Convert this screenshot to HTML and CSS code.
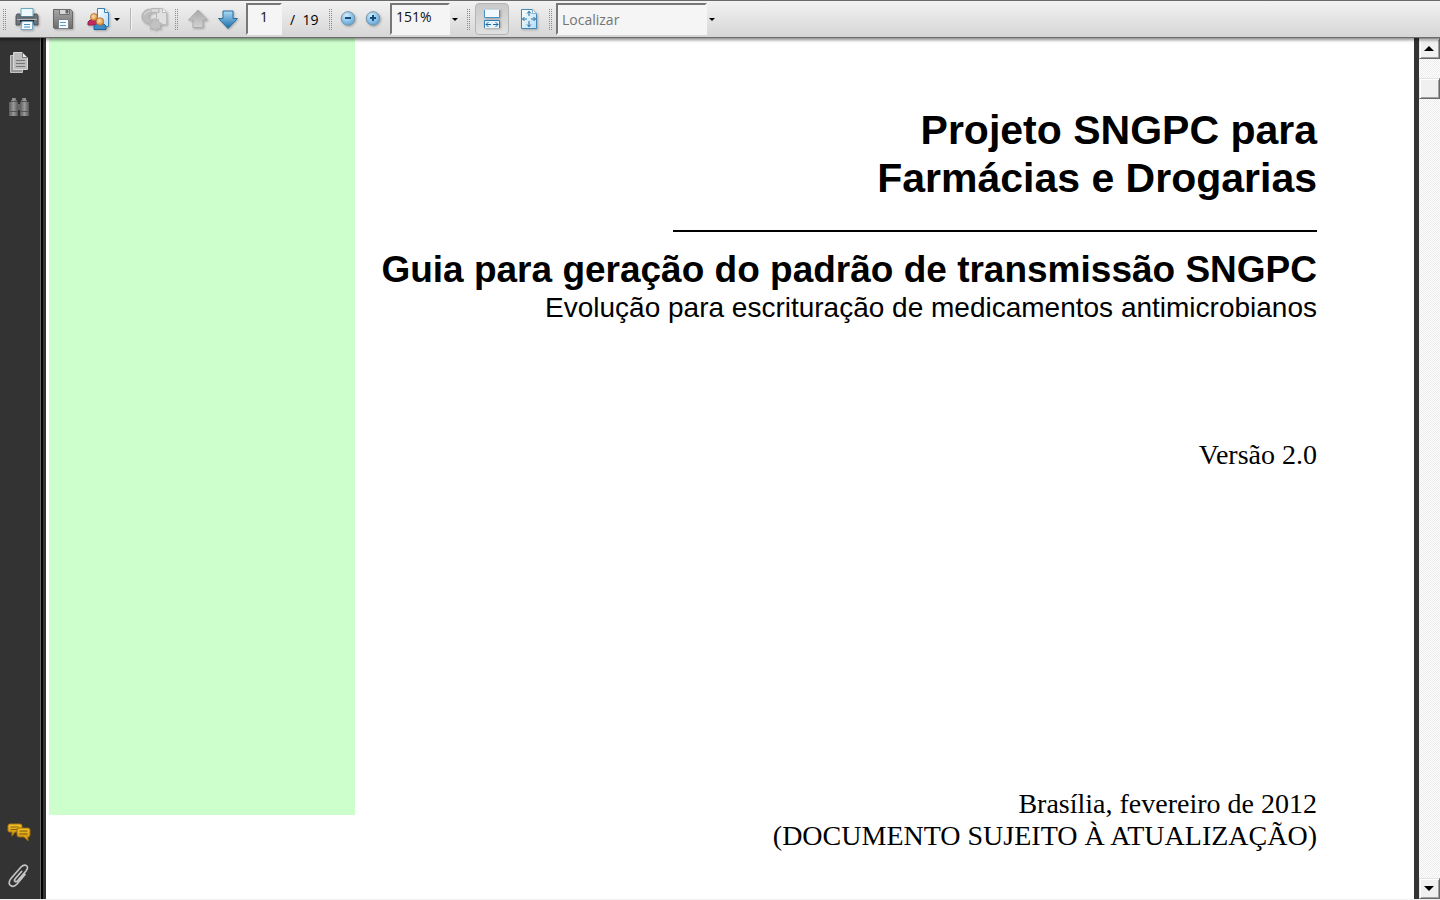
FILE: index.html
```html
<!DOCTYPE html>
<html lang="pt-BR">
<head>
<meta charset="utf-8">
<title>Guia para geração do padrão de transmissão SNGPC</title>
<link rel="stylesheet" href="styles.css">
</head>
<body>
<svg class="defs" width="0" height="0" aria-hidden="true">
  <defs>
    <linearGradient id="blue" x1="0" y1="0" x2="0" y2="1"><stop offset="0" stop-color="#a9dcf5"/><stop offset="1" stop-color="#1769ac"/></linearGradient>
    <linearGradient id="gray" x1="0" y1="0" x2="0" y2="1"><stop offset="0" stop-color="#a8a8a8"/><stop offset="1" stop-color="#d2d2d2"/></linearGradient>
    <linearGradient id="paper" x1="0" y1="0" x2="1" y2="1"><stop offset="0" stop-color="#ffffff"/><stop offset="1" stop-color="#b5dcf5"/></linearGradient>
    <linearGradient id="metal" x1="0" y1="0" x2="0" y2="1"><stop offset="0" stop-color="#a8a8a8"/><stop offset="1" stop-color="#6c6c6c"/></linearGradient>
    <linearGradient id="barrel" x1="0" y1="0" x2="1" y2="0"><stop offset="0" stop-color="#5b5b5b"/><stop offset=".5" stop-color="#989898"/><stop offset="1" stop-color="#575757"/></linearGradient>
    <radialGradient id="ball" cx=".4" cy=".3" r=".7"><stop offset="0" stop-color="#d3ecfb"/><stop offset="1" stop-color="#5fa5d8"/></radialGradient>
    <radialGradient id="skin" cx=".4" cy=".4" r=".6"><stop offset="0" stop-color="#ffe2ac"/><stop offset="1" stop-color="#e08a35"/></radialGradient>
    <linearGradient id="gold" x1="0" y1="0" x2="0" y2="1"><stop offset="0" stop-color="#f5c42b"/><stop offset="1" stop-color="#c98b0c"/></linearGradient>
  </defs>
</svg>
<header class="toolbar">
  <span class="grip"></span>
  <button class="tool" aria-label="Imprimir">
    <svg width="24" height="24" viewBox="0 0 24 24"><path d="M6 1.500h12v8H6z" fill="#edf9fc" stroke="#6aa9bd"/><path d="M2 7h3v3h14V7h3l1 2v9h-4v-2H5v2H1V9z" fill="#6c737a" stroke="#53595e"/><path d="M2 12.500h20" stroke="#b2b9be"/><path d="M5 14h14" stroke="#292e32" stroke-width="2"/><path d="M7 14.500h10.500v8H6z" fill="#f4fbff" stroke="#75a8c8"/><path d="M9 17.500h6M9 20h6" stroke="#4c8ebd"/></svg>
  </button>
  <button class="tool" aria-label="Salvar">
    <svg width="24" height="24" viewBox="0 0 24 24"><path d="M2.500 2.500h17l2 2v17h-18l-1-1z" fill="url(#metal)" stroke="#666"/><path d="M8.500 2.500h10v5h-10z" fill="#d9d9d9" stroke="#707070"/><path d="M14.500 3h3v3.500h-3z" fill="#666"/><path d="M7.500 12.500h10v9h-10z" fill="#f5faff" stroke="#808080"/><path d="M9 15.500h6M9 18.500h6" stroke="#5c9bc8"/></svg>
  </button>
  <button class="tool collab" aria-label="Colaborar">
    <svg width="24" height="24" viewBox="0 0 24 24"><path d="M10.500 1.500h7l4 4v14h-11z" fill="url(#paper)" stroke="#3a80b5"/><path d="M17.500 1.500v4h4" fill="#fff" stroke="#3a80b5"/><path d="M1 18v-3l2-2h8l2 2v3z" fill="#c32b5f" stroke="#96204a"/><circle cx="7" cy="10" r="3.500" fill="url(#skin)" stroke="#a86732" stroke-width=".7"/><path d="M7 22.500V19l2-2h8l2 2v3.500z" fill="#3b8bc7" stroke="#1f629c"/><circle cx="13" cy="14.500" r="3.800" fill="url(#skin)" stroke="#a86732" stroke-width=".7"/></svg>
    <i class="caret"></i>
  </button>
  <span class="rule"></span>
  <button class="tool review" aria-label="Revisar" disabled>
    <svg width="28" height="24" viewBox="0 0 28 24"><path d="M16.500 1.500h6l4 4v12h-10z" fill="#e0e0e0" stroke="#bcbcbc"/><path d="M22.500 1.500v4h4" fill="#f2f2f2" stroke="#bcbcbc"/><path d="M9 2C4.500 3 2 6 2 9.500 2 14 5.500 17 10 17c3 0 5-1 6-3-4 .5-7-1-7-4 0-2 1-3 3-4z" fill="#bdbdbd" stroke="#b0b0b0"/><path d="M4 8c2-3 4-4 7-4" stroke="#dedede" fill="none"/><path d="M11 1.500h8v4h-8z" fill="#d8d8d8" stroke="#b4b4b4"/><path d="m14 11 1.500 2.500 3-1 .5 3 3 1-2 2.500 1 3-3.500-.5-2 2-2-2-3.500.5 1-3-2-2.500 3-1 .5-3z" fill="#c2c2c2" stroke="#adadad" stroke-width=".7"/></svg>
  </button>
  <span class="grip after-gap"></span>
  <button class="tool page-step up" aria-label="Página anterior" disabled>
    <svg width="22" height="22" viewBox="0 0 22 22"><path d="M11 2 20.500 12H16v7.500H6V12H1.500z" fill="url(#gray)" stroke="#ababab"/></svg>
  </button>
  <button class="tool page-step" aria-label="Próxima página">
    <svg width="22" height="22" viewBox="0 0 22 22"><path d="M6 3h10v7.500h4.500L11 20.500l-9.500-10H6z" fill="url(#blue)" stroke="#2b6c9e"/></svg>
  </button>
  <input class="field page-number" aria-label="Página" value="1">
  <span class="page-total">/&nbsp; 19</span>
  <span class="grip"></span>
  <button class="tool zoom-step" aria-label="Reduzir">
    <svg width="18" height="18" viewBox="0 0 18 18"><circle cx="9" cy="8.500" r="6.800" fill="url(#ball)" stroke="#7696aa"/><path d="M6 8h6" stroke="#124e7c" stroke-width="2"/></svg>
  </button>
  <button class="tool zoom-step" aria-label="Ampliar">
    <svg width="18" height="18" viewBox="0 0 18 18"><circle cx="9" cy="8.500" r="6.800" fill="url(#ball)" stroke="#7696aa"/><path d="M6 8h6M9 5v6" stroke="#124e7c" stroke-width="2"/></svg>
  </button>
  <input class="field zoom-value" aria-label="Zoom" value="151%">
  <button class="drop" aria-label="Níveis de zoom"><i class="caret"></i></button>
  <span class="grip drop-gap"></span>
  <button class="tool fit-width" aria-label="Ajustar à largura" aria-pressed="true">
    <svg width="18" height="24" viewBox="0 0 18 24"><path d="M1.500 2v8.500h15V2" fill="#f2faff" stroke="#4c94c4"/><path d="M1 2.500h16" stroke="#c4dcea"/><path d="M1.500 21v-7.500h15V21" fill="#e4f4fe" stroke="#2f7db3"/><path d="M3 17.500h5M10 17.500h5M5.500 15 3 17.500 5.500 20M12.500 15l2.500 2.500-2.500 2.500" fill="none" stroke="#23689c"/></svg>
  </button>
  <button class="tool fit-page" aria-label="Ajustar à página">
    <svg width="18" height="22" viewBox="0 0 18 22"><path d="M1.500 1.500h11l4 4v15h-15z" fill="url(#paper)" stroke="#4189ba"/><path d="M12.500 1.500v4h4" fill="#fff" stroke="#7eb3d4"/><path d="M9 3v5M9 13v6M2.500 11H7M11 11h4.500M7 5.500 9 3.500l2 2M7 16.500l2 2 2-2M4.500 9l-2 2 2 2M13.500 9l2 2-2 2" fill="none" stroke="#23689c"/></svg>
  </button>
  <span class="grip"></span>
  <input class="field find" aria-label="Localizar" placeholder="Localizar">
  <button class="drop" aria-label="Opções de busca"><i class="caret"></i></button>
</header>
<div class="workspace">
  <nav class="sidebar" aria-label="Painéis">
    <button class="panel" aria-label="Páginas">
      <svg width="22" height="24" viewBox="0 0 22 24"><path d="M2.500 4.500h12v17h-12z" fill="#999" stroke="#c4c4c4"/><path d="M5.500 1.500h9l5 5v12h-14z" fill="#bcbcbc" stroke="#d8d8d8"/><path d="M14.500 1.500v5h5z" fill="#ececec" stroke="#555" stroke-width=".7"/><path d="M8 9.500h9M8 12.500h9M8 15.500h9" stroke="#777"/></svg>
    </button>
    <button class="panel" aria-label="Pesquisar">
      <svg width="22" height="22" viewBox="0 0 22 22"><path d="M4 2h4v2h1v2h1v14H1V6h2V4h1z" fill="url(#barrel)"/><path d="M14 2h4v2h1v2h2v14h-9V6h1V4h1z" fill="url(#barrel)"/><path d="M10 8h2v6h-2z" fill="#666"/><path d="M1 15.500h9M12 15.500h9M3 5.500h6M13 5.500h6" stroke="#555"/></svg>
    </button>
    <button class="panel comments" aria-label="Comentários">
      <svg width="24" height="20" viewBox="0 0 24 20"><path d="M3 2h10q2 0 2 2v5q0 1-2 1H8l-3 4v-4H3q-2 0-2-1V4q0-2 2-2z" fill="url(#gold)" stroke="#a77713"/><path d="M3.500 5h8M3.500 7.500h7" stroke="#8b610d"/><path d="M12 6h9q2 0 2 2v5q0 2-2 2v4l-4-4h-5q-2 0-2-2V8q0-2 2-2z" fill="url(#gold)" stroke="#98690c"/><path d="M12.500 9h8M12.500 12h8" stroke="#795406"/></svg>
    </button>
    <button class="panel" aria-label="Anexos">
      <svg width="24" height="26" viewBox="0 0 24 26"><path d="M14.500 8.500 8 16c-1.500 2 .8 3.700 2.300 2L19 8c4-5-1-8-5-4L4 15.500c-5 6 1.500 10.500 6 5.500l8-9.500" fill="none" stroke="#c4c4c4" stroke-width="1.700" stroke-linecap="round"/></svg>
    </button>
  </nav>
  <main class="page">
    <div class="band"></div>
    <article class="cover">
      <h1 class="project">Projeto SNGPC para<br>Farmácias e Drogarias</h1>
      <hr class="line">
      <h2 class="guide">Guia para geração do padrão de transmissão SNGPC</h2>
      <p class="subtitle">Evolução para escrituração de medicamentos antimicrobianos</p>
      <p class="version">Versão 2.0</p>
      <p class="imprint">Brasília, fevereiro de 2012<br>(DOCUMENTO SUJEITO À ATUALIZAÇÃO)</p>
    </article>
  </main>
  <div class="scrollbar">
    <button class="arrow" aria-label="Rolar para cima"><i class="triangle"></i></button>
    <span class="thumb"></span>
    <button class="arrow down" aria-label="Rolar para baixo"><i class="triangle"></i></button>
  </div>
</div>
</body>
</html>
```
FILE: styles.css
```css
* { box-sizing: border-box; }
body {
  margin: 0;
  height: 100vh;
  display: flex;
  flex-direction: column;
  background: #fff;
  font-family: "Open Sans", "Noto Sans", sans-serif;
  font-size: 14px;
}
.defs { position: absolute; }
button { border: 0; padding: 0; background: none; font: inherit; }

.toolbar {
  position: relative;
  flex: none;
  height: 38px;
  display: flex;
  align-items: center;
  padding-left: 3px;
  background: linear-gradient(#f2f2f2, #d6d6d6);
  border-top: 1px solid #6c6a6c;
  border-bottom: 1px solid #6c6c6c;
  box-shadow: 0 1px 3px 1px rgba(0, 0, 0, .45);
  z-index: 1;
}
.grip {
  flex: none;
  width: 3px;
  height: 21px;
  margin-right: 3px;
  background: repeating-conic-gradient(from 270deg, #8c8c8c 0 25%, transparent 0 100%) 0 0 / 2px 2px;
}
.tool {
  flex: none;
  width: 36px;
  height: 32px;
  display: flex;
  align-items: center;
  justify-content: center;
}
.tool svg { filter: drop-shadow(1px 1px 1px rgba(0, 0, 0, .25)); }
.collab { width: 45px; justify-content: flex-start; padding-left: 6px; gap: 3px; }
.caret {
  width: 0;
  height: 0;
  border: 3px solid transparent;
  border-top-color: #000;
  border-bottom: 0;
}
.rule { width: 2px; height: 22px; margin: 0 4px; background: #b4b4b4; border-right: 1px solid #f5f5f5; }
.review { width: 35px; }
.after-gap { margin-left: 4px; }
.page-step { width: 30px; }
.up { margin-left: 2px; }
.field {
  flex: none;
  height: 32px;
  margin: 0;
  padding: 0 4px 5px;
  border: 2px solid;
  border-color: #777 #f5f5f5 #f5f5f5 #777;
  border-radius: 0;
  background: #f5f5f5;
  font: inherit;
  color: #111;
}
.page-number { width: 36px; margin-left: 3px; text-align: center; }
.page-total { width: 47px; padding-left: 8px; }
.zoom-step { width: 25px; }
.zoom-value { width: 60px; margin-left: 5px; }
.drop { width: 9px; height: 30px; display: flex; align-items: center; justify-content: center; }
.drop-gap { margin-left: 8px; }
.fit-width {
  width: 34px;
  margin-left: 2px;
  background: linear-gradient(#c9c9c9, #e1e1e1);
  border: 1px solid #b5b5b5;
  border-radius: 4px;
}
.fit-page { width: 40px; }
.find { width: 151px; margin-left: 1px; padding-bottom: 0; }
.find::placeholder { color: #747474; opacity: 1; }

.workspace { flex: 1; min-height: 0; display: flex; background: #333; border-bottom: 1px solid #f0f0f0; }
.sidebar {
  flex: none;
  width: 43px;
  margin-right: 3px;
  padding: 12px 3px 10px 0;
  display: flex;
  flex-direction: column;
  align-items: center;
  gap: 18px;
  background: #333;
  border-right: 2px solid #000;
  box-shadow: inset -1px 0 #666;
}
.panel { height: 26px; display: flex; align-items: center; }
.comments { margin-top: auto; }

.page { flex: 1; min-width: 0; display: flex; padding-left: 3px; background: #fff; }
.band { width: 306px; height: 777px; background: #cfc; }
.cover {
  flex: 1;
  padding: 68px 97px 0 0;
  text-align: right;
  font-family: "Liberation Sans", Arial, sans-serif;
  color: #000;
}
.project { margin: 0; font-size: 41px; line-height: 48px; }
.line { width: 644px; height: 2px; margin: 28px 0 16px auto; border: 0; background: #000; }
.guide { margin: 0; font-size: 37px; line-height: 44px; white-space: nowrap; }
.subtitle { margin: 0; font-size: 28px; line-height: 32px; white-space: nowrap; }
.version, .imprint { margin: 0; font-family: "Liberation Serif", "Times New Roman", serif; font-size: 28px; line-height: 32px; }
.version { margin-top: 115px; }
.imprint { margin-top: 317px; }

.scrollbar {
  flex: none;
  width: 21px;
  margin-left: 5px;
  display: flex;
  flex-direction: column;
  background: repeating-conic-gradient(#ececec 0 25%, #fff 0 50%) 0 0 / 2px 2px;
}
.arrow, .thumb {
  height: 21px;
  display: flex;
  align-items: center;
  justify-content: center;
  background: #f0f0f0;
  border: 1px solid #e3e3e3;
  border-right-color: #696969;
  border-bottom-color: #696969;
  box-shadow: inset 1px 1px #fff, inset -1px -1px #a0a0a0;
}
.arrow { padding-right: 2px; }
.thumb { margin-top: 19px; }
.triangle { width: 0; height: 0; border: 5px solid transparent; border-bottom-color: #000; border-top: 0; }
.down { margin-top: auto; }
.down .triangle { border: 5px solid transparent; border-top-color: #000; border-bottom: 0; }
```
